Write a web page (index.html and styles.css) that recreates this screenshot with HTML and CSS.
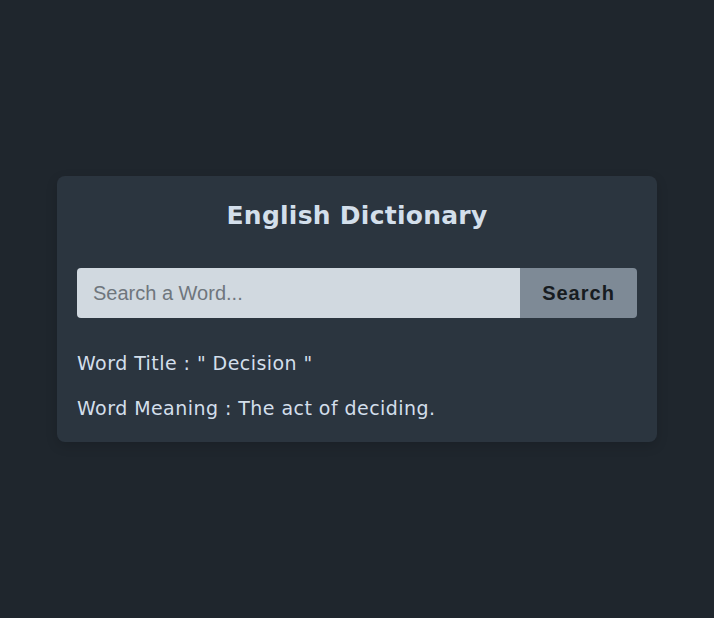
FILE: index.html
```html
<!DOCTYPE html>
<html lang="en">
<head>
<meta charset="utf-8">
<title>English Dictionary</title>
<link rel="stylesheet" href="styles.css">
</head>
<body>
<main class="card">
  <h1 class="title">English Dictionary</h1>
  <form class="search" onsubmit="return false">
    <input class="search-input" type="text" placeholder="Search a Word...">
    <button class="search-btn" type="submit">Search</button>
  </form>
  <div class="results">
    <p class="line">Word Title : " Decision "</p>
    <p class="line">Word Meaning : The act of deciding.</p>
  </div>
</main>
</body>
</html>
```

FILE: styles.css
```css
* { box-sizing: border-box; }
html, body { height: 100%; }
body {
  margin: 0;
  background: #1f262d;
  display: flex;
  align-items: center;
  justify-content: center;
  font-family: "DejaVu Sans", sans-serif;
}
.card {
  width: 600px;
  background: #2b353f;
  border-radius: 8px;
  padding: 20px 20px 20px;
  box-shadow: 0 4px 12px rgba(0,0,0,0.15);
}
.title {
  margin: 0 0 32px;
  height: 40px;
  line-height: 40px;
  text-align: center;
  font-size: 25px;
  font-weight: 700;
  letter-spacing: 0.25px;
  color: #d3dfeb;
}
.search {
  display: flex;
  height: 50px;
  margin: 0;
}
.search-input {
  flex: 1;
  min-width: 0;
  border: none;
  outline: none;
  background: #d1d9e0;
  border-radius: 4px 0 0 4px;
  padding: 0 16px;
  font-family: "Liberation Sans", Arial, sans-serif;
  font-size: 20px;
  color: #222;
}
.search-input::placeholder { color: #6f767d; }
.search-btn {
  width: 117px;
  border: none;
  background: #7e8a96;
  border-radius: 0 4px 4px 0;
  font-family: "Liberation Sans", Arial, sans-serif;
  font-size: 20px;
  font-weight: 700;
  letter-spacing: 1px;
  color: #171c21;
  cursor: pointer;
}
.results {
  margin-top: 32px;
  display: flex;
  flex-direction: column;
  gap: 18px;
}
.line {
  margin: 0;
  font-size: 19px;
  line-height: 27px;
  letter-spacing: 0.45px;
  color: #d3dfeb;
}
```
